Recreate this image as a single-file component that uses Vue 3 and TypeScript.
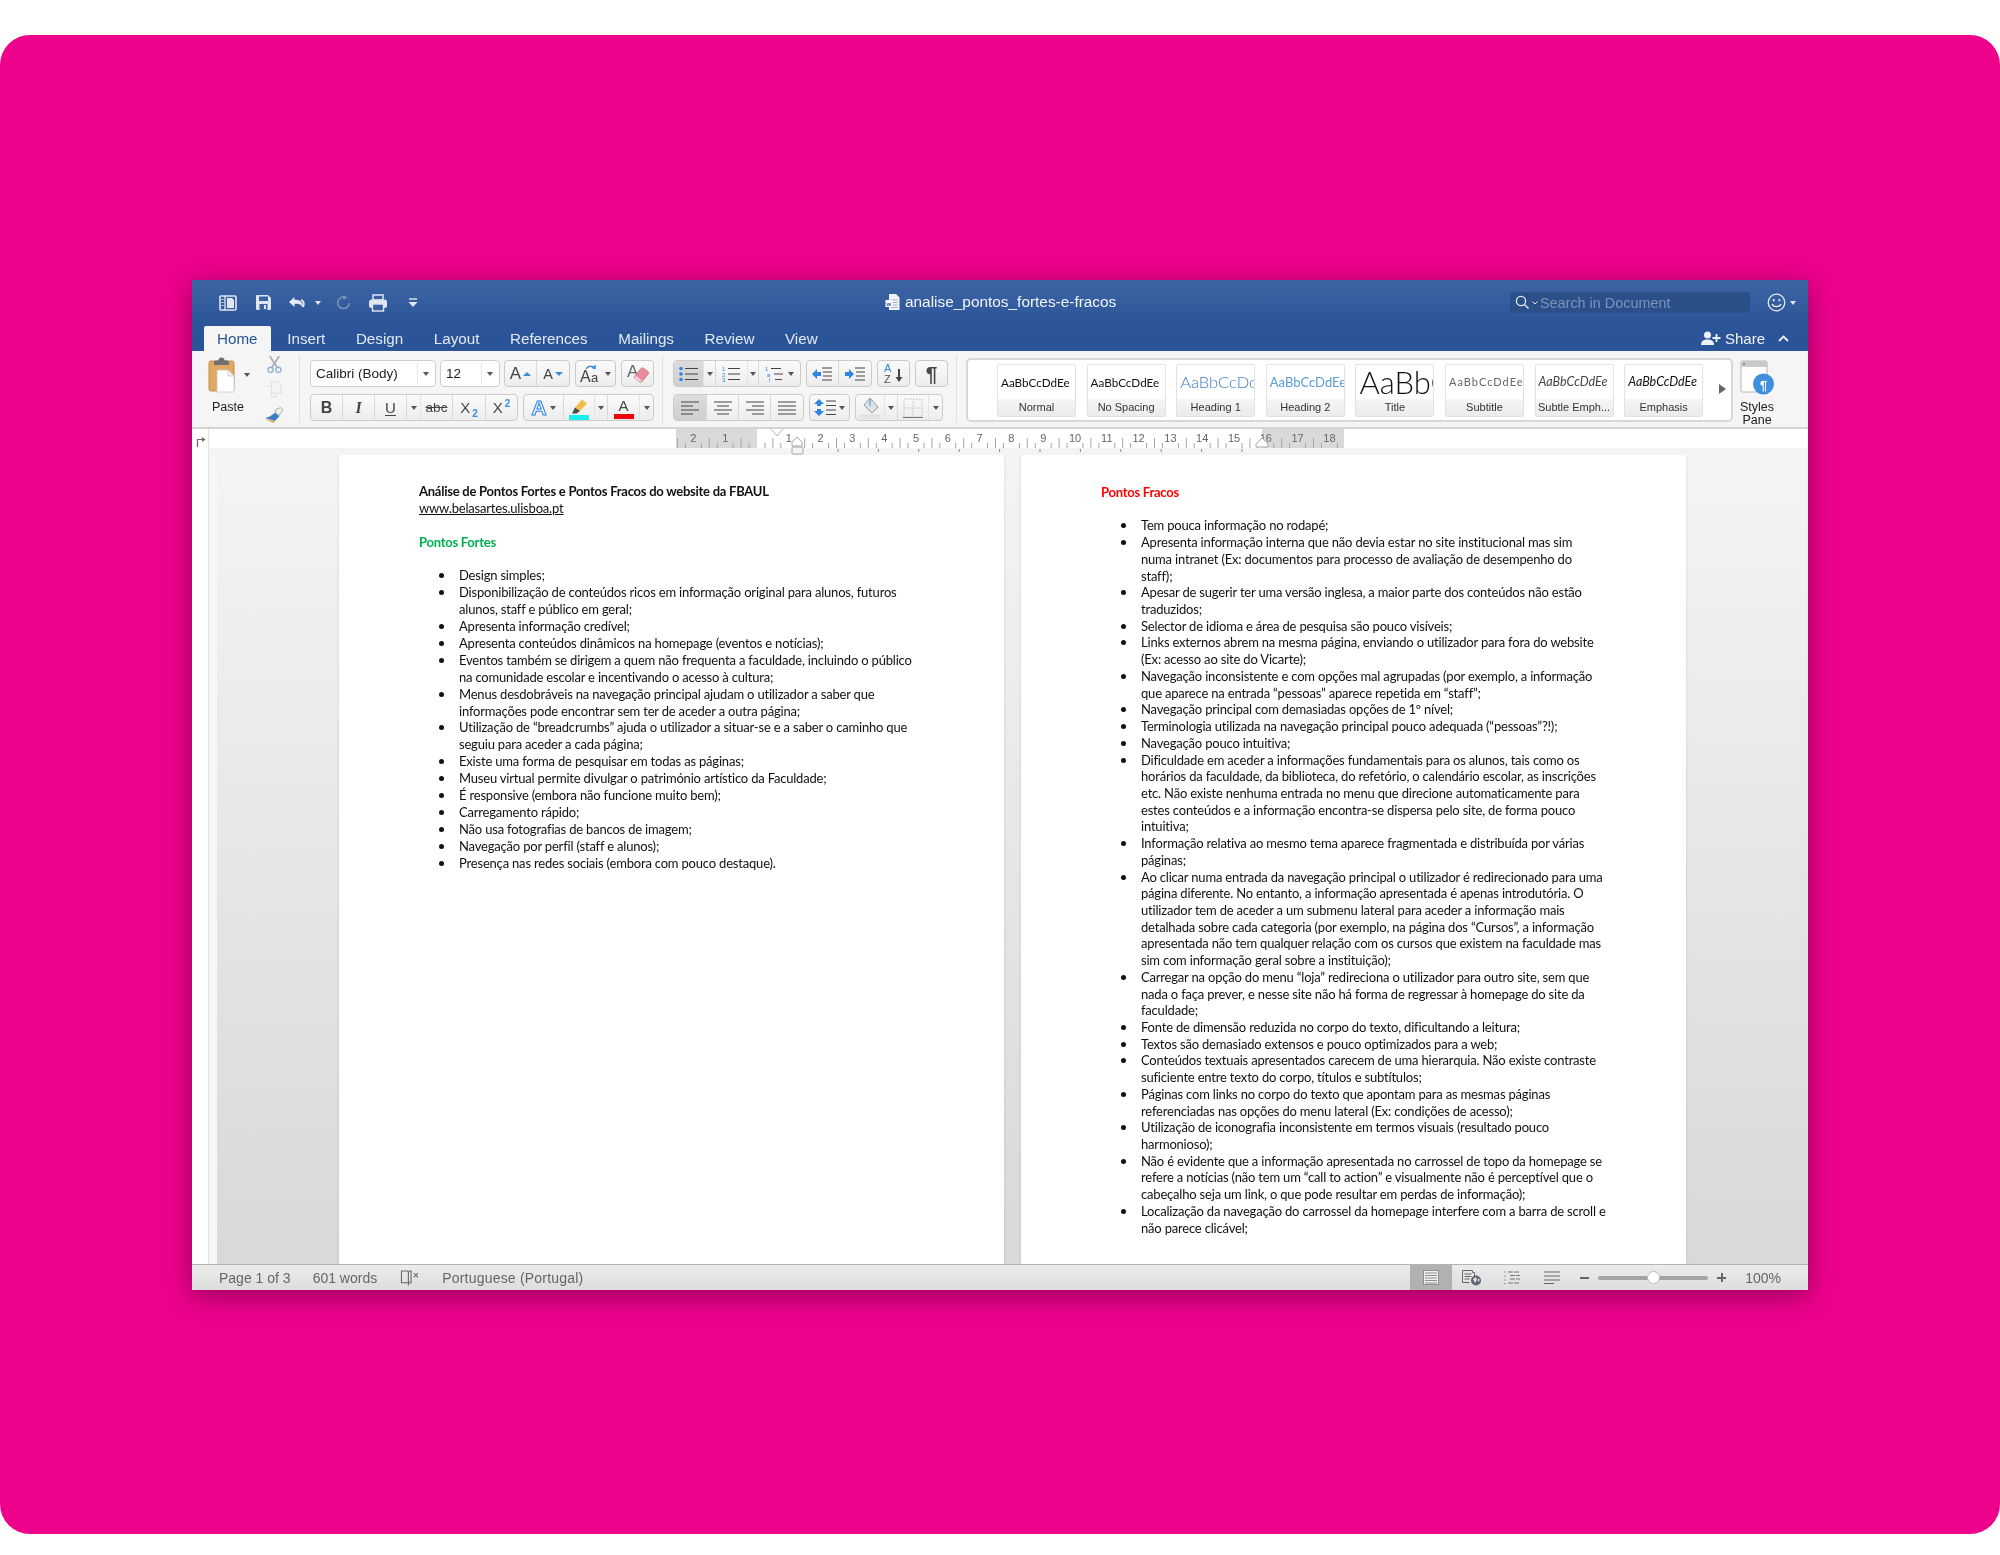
<script setup lang="ts">
const tabs = ['Home', 'Insert', 'Design', 'Layout', 'References', 'Mailings', 'Review', 'View']

const styles = [
  { name: 'Normal', cls: 's-normal', sample: 'AaBbCcDdEe' },
  { name: 'No Spacing', cls: 's-normal', sample: 'AaBbCcDdEe' },
  { name: 'Heading 1', cls: 's-h1', sample: 'AaBbCcDdEe' },
  { name: 'Heading 2', cls: 's-h2', sample: 'AaBbCcDdEe' },
  { name: 'Title', cls: 's-title', sample: 'AaBbCcDdEe' },
  { name: 'Subtitle', cls: 's-sub', sample: 'AaBbCcDdEe' },
  { name: 'Subtle Emph...', cls: 's-subtle', sample: 'AaBbCcDdEe' },
  { name: 'Emphasis', cls: 's-emph', sample: 'AaBbCcDdEe' },
]

const fortes: string[][] = [
  ['Design simples;'],
  ['Disponibilização de conteúdos ricos em informação original para alunos, futuros', 'alunos, staff e público em geral;'],
  ['Apresenta informação credível;'],
  ['Apresenta conteúdos dinâmicos na homepage (eventos e notícias);'],
  ['Eventos também se dirigem a quem não frequenta a faculdade, incluindo o público', 'na comunidade escolar e incentivando o acesso à cultura;'],
  ['Menus desdobráveis na navegação principal ajudam o utilizador a saber que', 'informações pode encontrar sem ter de aceder a outra página;'],
  ['Utilização de “breadcrumbs” ajuda o utilizador a situar-se e a saber o caminho que', 'seguiu para aceder a cada página;'],
  ['Existe uma forma de pesquisar em todas as páginas;'],
  ['Museu virtual permite divulgar o património artístico da Faculdade;'],
  ['É responsive (embora não funcione muito bem);'],
  ['Carregamento rápido;'],
  ['Não usa fotografias de bancos de imagem;'],
  ['Navegação por perfil (staff e alunos);'],
  ['Presença nas redes sociais (embora com pouco destaque).'],
]

const fracos: string[][] = [
  ['Tem pouca informação no rodapé;'],
  ['Apresenta informação interna que não devia estar no site institucional mas sim', 'numa intranet (Ex: documentos para processo de avaliação de desempenho do', 'staff);'],
  ['Apesar de sugerir ter uma versão inglesa, a maior parte dos conteúdos não estão', 'traduzidos;'],
  ['Selector de idioma e área de pesquisa são pouco visíveis;'],
  ['Links externos abrem na mesma página, enviando o utilizador para fora do website', '(Ex: acesso ao site do Vicarte);'],
  ['Navegação inconsistente e com opções mal agrupadas (por exemplo, a informação', 'que aparece na entrada “pessoas” aparece repetida em “staff”;'],
  ['Navegação principal com demasiadas opções de 1º nível;'],
  ['Terminologia utilizada na navegação principal pouco adequada (“pessoas”?!);'],
  ['Navegação pouco intuitiva;'],
  ['Dificuldade em aceder a informações fundamentais para os alunos, tais como os', 'horários da faculdade, da biblioteca, do refetório, o calendário escolar, as inscrições', 'etc. Não existe nenhuma entrada no menu que direcione automaticamente para', 'estes conteúdos e a informação encontra-se dispersa pelo site, de forma pouco', 'intuitiva;'],
  ['Informação relativa ao mesmo tema aparece fragmentada e distribuída por várias', 'páginas;'],
  ['Ao clicar numa entrada da navegação principal o utilizador é redirecionado para uma', 'página diferente. No entanto, a informação apresentada é apenas introdutória. O', 'utilizador tem de aceder a um submenu lateral para aceder a informação mais', 'detalhada sobre cada categoria (por exemplo, na página dos “Cursos”, a informação', 'apresentada não tem qualquer relação com os cursos que existem na faculdade mas', 'sim com informação geral sobre a instituição);'],
  ['Carregar na opção do menu “loja” redireciona o utilizador para outro site, sem que', 'nada o faça prever, e nesse site não há forma de regressar à homepage do site da', 'faculdade;'],
  ['Fonte de dimensão reduzida no corpo do texto, dificultando a leitura;'],
  ['Textos são demasiado extensos e pouco optimizados para a web;'],
  ['Conteúdos textuais apresentados carecem de uma hierarquia. Não existe contraste', 'suficiente entre texto do corpo, títulos e subtítulos;'],
  ['Páginas com links no corpo do texto que apontam para as mesmas páginas', 'referenciadas nas opções do menu lateral (Ex: condições de acesso);'],
  ['Utilização de iconografia inconsistente em termos visuais (resultado pouco', 'harmonioso);'],
  ['Não é evidente que a informação apresentada no carrossel de topo da homepage se', 'refere a notícias (não tem um “call to action” e visualmente não é perceptível que o', 'cabeçalho seja um link, o que pode resultar em perdas de informação);'],
  ['Localização da navegação do carrossel da homepage interfere com a barra de scroll e', 'não parece clicável;'],
]

// ruler: x is measured from the start of the svg, 1 unit on the ruler = 31.8px
const zero = 548
const unit = 31.8
const rulerNums: { x: number; n: number }[] = []
for (let n = 2; n >= 1; n--) rulerNums.push({ x: zero - n * unit, n })
for (let n = 1; n <= 18; n++) rulerNums.push({ x: zero + n * unit, n })

const minorTicks: number[] = []
const halfTicks: number[] = []
for (let i = -10; i <= 73; i++) {
  const x = zero + (i * unit) / 4
  if (i % 4 === 0) continue
  if (i % 2 !== 0) minorTicks.push(x)
  else halfTicks.push(x)
}
const tabStops: number[] = []
for (let i = 0; i < 11; i++) tabStops.push(629 + i * 40.4)
</script>

<template>
  <div class="screen">
    <div class="stage">
      <div class="window">
        <header class="titlebar">
          <div class="top-row">
            <div class="quick">
              <svg class="q-panes" width="18" height="16" viewBox="0 0 18 16">
                <rect x="1" y="1" width="16" height="14" rx="1" fill="none" stroke="#dfe6f2" stroke-width="1.6" />
                <path d="M6 1v14" stroke="#dfe6f2" stroke-width="1.4" />
                <path d="M2.5 4.5h2M2.5 7.5h2M2.5 10.5h2" stroke="#dfe6f2" stroke-width="1.2" />
                <path d="M8 3h5l2 2v8H8z" fill="#dfe6f2" />
              </svg>
              <svg class="q-save" width="17" height="17" viewBox="0 0 17 17">
                <path d="M2 1h11l3 3v10.5a1.5 1.5 0 0 1-1.5 1.5H2a1 1 0 0 1-1-1V2a1 1 0 0 1 1-1z" fill="#dfe6f2" />
                <rect x="4" y="2.5" width="9" height="4.5" fill="#3a62a3" />
                <rect x="4.5" y="10" width="8" height="6" fill="#3a62a3" />
                <rect x="9" y="11" width="2" height="4" fill="#dfe6f2" />
              </svg>
              <svg class="q-undo" width="18" height="14" viewBox="0 0 18 14">
                <path d="M6.5 1 1 6l5.500 5V8c3.500-.6 6.500 0 8 3.500C15.500 6.500 12 3.500 6.500 3.800z" fill="#e7ecf5" />
                <path d="M15 11c1.500-3.500.5-6-2-7.200" fill="none" stroke="#e7ecf5" stroke-width="1.8" />
              </svg>
              <i class="caret light q-caret"></i>
              <svg class="q-redo" width="15" height="15" viewBox="0 0 15 15">
                <path d="M9.5 2.300A5.800 5.800 0 1 0 13.300 8" fill="none" stroke="#7891bb" stroke-width="1.6" />
                <path d="M7.5 0v5l4-2.500z" fill="#7891bb" />
              </svg>
              <svg class="q-print" width="20" height="18" viewBox="0 0 20 18">
                <rect x="5" y="1" width="10" height="5" fill="none" stroke="#dfe6f2" stroke-width="1.5" />
                <rect x="1" y="5.5" width="18" height="8.500" rx="2.5" fill="#dfe6f2" />
                <rect x="4.5" y="10" width="11" height="7" fill="#3a62a3" stroke="#dfe6f2" stroke-width="1.4" />
              </svg>
              <svg class="q-more" width="10" height="10" viewBox="0 0 10 10">
                <path d="M1 1h8" stroke="#dfe6f2" stroke-width="1.4" />
                <path d="M.5 4h9L5 9z" fill="#dfe6f2" />
              </svg>
            </div>
            <div class="doc-title">
              <svg width="15" height="18" viewBox="0 0 15 18">
                <path d="M4 1h7l3.500 3.500V17H4z" fill="#f2f4f8" />
                <path d="M6 7h6.500M6 9.500h6.500M6 12h6.500M6 14.500h6.500" stroke="#9fb3d1" stroke-width="1" />
                <rect x=".5" y="7" width="7" height="7" fill="#fff" />
                <text x="1.5" y="12.800" class="w-mark">w</text>
              </svg>
              <span>analise_pontos_fortes-e-fracos</span>
            </div>
            <div class="search">
              <svg width="16" height="16" viewBox="0 0 16 16">
                <circle cx="6" cy="6" r="4.6" fill="none" stroke="#e3e9f3" stroke-width="1.3" />
                <path d="m9.500 9.500 4 4" stroke="#e3e9f3" stroke-width="1.4" />
              </svg>
              <svg width="6" height="4" viewBox="0 0 6 4"><path d="m.5.500 2.500 2.500L5.500.500" fill="none" stroke="#e3e9f3" /></svg>
              <span>Search in Document</span>
            </div>
            <svg class="smiley" width="19" height="19" viewBox="0 0 19 19">
              <circle cx="9.5" cy="9.5" r="8.3" fill="none" stroke="#e7ecf5" stroke-width="1.3" />
              <circle cx="6.7" cy="7.2" r="1.1" fill="#e7ecf5" />
              <circle cx="12.3" cy="7.2" r="1.1" fill="#e7ecf5" />
              <path d="M5 11c1.200 3.400 7.800 3.400 9 0" fill="none" stroke="#e7ecf5" stroke-width="1.3" />
            </svg>
            <i class="caret light smiley-caret"></i>
          </div>
          <div class="tab-row">
            <nav class="tabs">
              <span v-for="(t, i) in tabs" :key="t" class="tab" :class="{ active: i === 0 }">{{ t }}</span>
            </nav>
            <div class="share">
              <svg width="20" height="15" viewBox="0 0 20 15">
                <circle cx="6.5" cy="4" r="3.5" fill="#eef2f8" />
                <path d="M0 14c0-4 2.500-5.500 6.500-5.500S13 10 13 14z" fill="#eef2f8" />
                <path d="M15.500 3v8M11.500 7h8" stroke="#eef2f8" stroke-width="1.8" />
              </svg>
              <span>Share</span>
              <svg class="chev" width="11" height="7" viewBox="0 0 11 7"><path d="m1 6 4.500-4.500L10 6" fill="none" stroke="#eef2f8" stroke-width="1.8" /></svg>
            </div>
          </div>
        </header>

        <section class="ribbon">
          <div class="group g-paste">
            <div class="paste">
              <div class="paste-top">
                <svg width="30" height="36" viewBox="0 0 30 36">
                  <rect x="1" y="4" width="25" height="30" rx="2" fill="#e0a860" stroke="#c48f4c" />
                  <path d="M6 5.500a2 2 0 0 1 2-2h2.500a3 3 0 0 1 6 0H19a2 2 0 0 1 2 2V8H6z" fill="#6e7074" />
                  <path d="M9 13h11l6 6v16H9z" fill="#fff" stroke="#c8c8c8" stroke-width=".8" />
                  <path d="M20 13v6h6" fill="#f0f0f0" stroke="#c8c8c8" stroke-width=".8" />
                </svg>
                <i class="caret paste-caret"></i>
              </div>
              <span class="paste-label">Paste</span>
            </div>
            <div class="clip-icons">
              <svg width="17" height="18" viewBox="0 0 17 20">
                <path d="M3 0 11.500 13M14 0 5.500 13" stroke="#a9adb3" stroke-width="2" />
                <circle cx="4" cy="16" r="3" fill="none" stroke="#8eb4de" stroke-width="1.6" />
                <circle cx="13" cy="16" r="3" fill="none" stroke="#8eb4de" stroke-width="1.6" />
              </svg>
              <svg width="16" height="18" viewBox="0 0 16 17">
                <path d="M5.500 1h6l3.500 3.500V12H5.500z M1 5h4.500v11H10v-4" fill="none" stroke="#e2e2e2" stroke-width="1.2" />
              </svg>
              <svg width="20" height="17" viewBox="0 0 20 17">
                <path d="M12 2.500 17 .5l2.500 2.500-3 3.500-1 2.500-4-3z" fill="#f0f0f0" stroke="#9a9a9a" stroke-width=".8" />
                <path d="M11 6l4.500 3.500-4.500 5L1 11.500l5-2z" fill="#3c7cc4" />
                <path d="M3 12.500l8 2.500-1.500 1.500L1 12.500z" fill="#e5a13f" />
              </svg>
            </div>
          </div>

          <div class="group g-font">
            <div class="rows">
              <div class="row">
                <div class="field w-126">
                  <span>Calibri (Body)</span><i class="field-sep"></i><i class="caret"></i>
                </div>
                <div class="field w-60">
                  <span>12</span><i class="field-sep"></i><i class="caret"></i>
                </div>
                <div class="seg">
                  <div class="b w-32 big-a"><span class="a18">A</span><i class="tri-up"></i></div>
                  <div class="b w-32 big-a"><span class="a15">A</span><i class="tri-down"></i></div>
                </div>
                <div class="seg">
                  <div class="b w-39 case-btn">
                    <svg width="22" height="20" viewBox="0 0 22 20">
                      <text x="0" y="18" class="case-a">A</text><text x="11" y="18" class="case-b">a</text>
                      <path d="M6 5c2-3.500 6-3.500 8-1" fill="none" stroke="#3a8be0" stroke-width="1.5" />
                      <path d="m16 .5-.5 5-4-1.500z" fill="#3a8be0" />
                    </svg>
                    <i class="caret"></i>
                  </div>
                </div>
                <div class="seg">
                  <div class="b w-31 clear-btn">
                    <svg width="24" height="22" viewBox="0 0 24 22">
                      <text x="1" y="14" class="clear-a">A</text>
                      <path d="M15 5.500c1-1 2-1 3 0l4 3c1 1 1 2 0 3l-6 7c-1 1-2 1-3 0l-4-3c-1-1-1-2 0-3z" fill="#e88b98" stroke="#b86a75" stroke-width=".6" />
                      <path d="m9.500 12.500 6.500 5-2 1.500-5-3.500z" fill="#f5d5d9" />
                    </svg>
                  </div>
                </div>
              </div>
              <div class="row">
                <div class="seg">
                  <div class="b w-32 t-bold">B</div>
                  <div class="b w-32 t-ital">I</div>
                  <div class="b w-32 t-under">U</div>
                  <div class="b w-14 no-sep-light"><i class="caret"></i></div>
                  <div class="b w-32 t-strike">abc</div>
                  <div class="b w-33 t-x"><span>X<sub>2</sub></span></div>
                  <div class="b w-31 t-x"><span>X<sup>2</sup></span></div>
                </div>
                <div class="seg">
                  <div class="b w-40 effect">
                    <span class="a-outline">A</span><i class="caret"></i>
                  </div>
                  <div class="b w-31 marker no-sep-light">
                    <svg width="22" height="22" viewBox="0 0 22 22">
                      <path d="M14 1.500 19 5.500 12 13 7 9.500z" fill="#f1c04c" />
                      <path d="M7 9.500 12 13l-3.500 2.500H4z" fill="#4b4b4b" />
                      <rect x="1" y="17" width="20" height="5" fill="#19eef0" />
                    </svg>
                  </div>
                  <div class="b w-13"><i class="caret"></i></div>
                  <div class="b w-32 font-color no-sep-light">
                    <span>A</span><i class="red-bar"></i>
                  </div>
                  <div class="b w-13"><i class="caret"></i></div>
                </div>
              </div>
            </div>
          </div>

          <div class="group g-para">
            <div class="rows">
              <div class="row">
                <div class="seg">
                  <div class="b w-30 on no-sep-light">
                    <svg width="20" height="16" viewBox="0 0 20 16">
                      <circle cx="2" cy="2.5" r="1.8" fill="#2f86e0" /><circle cx="2" cy="8" r="1.8" fill="#2f86e0" /><circle cx="2" cy="13.5" r="1.8" fill="#2f86e0" />
                      <path d="M6 2.500h13M6 8h13M6 13.500h13" stroke="#444" stroke-width="1.2" />
                    </svg>
                  </div>
                  <div class="b w-12"><i class="caret"></i></div>
                  <div class="b w-32 no-sep-light">
                    <svg width="20" height="16" viewBox="0 0 20 16">
                      <text x="0" y="5" class="nb">1</text><text x="0" y="10.5" class="nb">2</text><text x="0" y="16" class="nb">3</text>
                      <path d="M6 2.500h12M6 8h12M6 13.500h12" stroke="#444" stroke-width="1.2" />
                    </svg>
                  </div>
                  <div class="b w-11"><i class="caret"></i></div>
                  <div class="b w-41 multi">
                    <svg width="20" height="16" viewBox="0 0 20 16">
                      <text x="0" y="5" class="nb">1</text><text x="2" y="10.5" class="nb">a</text><text x="4" y="16" class="nb">i</text>
                      <path d="M6 2.500h10M9 8h9M10 13.500h7" stroke="#444" stroke-width="1.2" />
                    </svg>
                    <i class="caret"></i>
                  </div>
                </div>
                <div class="seg">
                  <div class="b w-32">
                    <svg width="21" height="14" viewBox="0 0 21 14">
                      <path d="M0 7 5 2v3h4v4H5v3z" fill="#2f86e0" />
                      <path d="M10 1h10M11 5h9M11 9h9M10 13h10" stroke="#444" stroke-width="1.2" />
                    </svg>
                  </div>
                  <div class="b w-32">
                    <svg width="21" height="14" viewBox="0 0 21 14">
                      <path d="M9 7 4 2v3H0v4h4v3z" fill="#2f86e0" />
                      <path d="M10 1h10M11 5h9M11 9h9M10 13h10" stroke="#444" stroke-width="1.2" />
                    </svg>
                  </div>
                </div>
                <div class="seg">
                  <div class="b w-31">
                    <svg width="22" height="21" viewBox="0 0 22 21">
                      <text x="1" y="9" class="sort-a">A</text><text x="1" y="20" class="sort-z">Z</text>
                      <path d="M15 6h2v8h2.500L16 19l-3.500-5H15z" fill="#444" />
                    </svg>
                  </div>
                </div>
                <div class="seg">
                  <div class="b w-31 pilcrow">¶</div>
                </div>
              </div>
              <div class="row">
                <div class="seg">
                  <div class="b w-33 on">
                    <svg width="18" height="14" viewBox="0 0 18 14"><path d="M0 1h18M0 5h12M0 9h18M0 13h12" stroke="#444" stroke-width="1.2" /></svg>
                  </div>
                  <div class="b w-32">
                    <svg width="18" height="14" viewBox="0 0 18 14"><path d="M0 1h18M3 5h12M0 9h18M3 13h12" stroke="#444" stroke-width="1.2" /></svg>
                  </div>
                  <div class="b w-32">
                    <svg width="18" height="14" viewBox="0 0 18 14"><path d="M0 1h18M6 5h12M0 9h18M6 13h12" stroke="#444" stroke-width="1.2" /></svg>
                  </div>
                  <div class="b w-32">
                    <svg width="18" height="14" viewBox="0 0 18 14"><path d="M0 1h18M0 5h18M0 9h18M0 13h18" stroke="#444" stroke-width="1.2" /></svg>
                  </div>
                </div>
                <div class="seg">
                  <div class="b w-39 spacing">
                    <svg width="22" height="17" viewBox="0 0 22 17">
                      <path d="M5 0 10 5H7v2H3V5H0z M5 17 0 12h3v-2h4v2h3z" fill="#2f86e0" />
                      <path d="M12 2h10M12 6.500h10M12 11h10M12 15.500h10" stroke="#444" stroke-width="1.2" />
                    </svg>
                    <i class="caret"></i>
                  </div>
                </div>
                <div class="seg">
                  <div class="b w-29 no-sep-light">
                    <svg width="22" height="22" viewBox="0 0 22 22">
                      <path d="M11 1 19 10l-6 6-8-8z" fill="#dbe3ea" stroke="#8d8d8d" stroke-width=".9" />
                      <path d="M11 1v8" stroke="#7aa8d8" stroke-width="1.6" />
                      <rect x="1" y="18" width="20" height="4" fill="#e6e6e6" stroke="#d4d4d4" stroke-width=".6" />
                    </svg>
                  </div>
                  <div class="b w-13"><i class="caret"></i></div>
                  <div class="b w-31 no-sep-light">
                    <svg width="20" height="20" viewBox="0 0 20 20">
                      <path d="M1 1h18v18H1zM10 1v18M1 10h18" fill="none" stroke="#bdbdbd" stroke-dasharray="1.5 1.5" />
                      <path d="M0 19.500h20" stroke="#777" stroke-width="1.2" />
                    </svg>
                  </div>
                  <div class="b w-13"><i class="caret"></i></div>
                </div>
              </div>
            </div>
          </div>

          <div class="gallery">
            <div v-for="s in styles" :key="s.name" class="style-card">
              <div class="sample" :class="s.cls">{{ s.sample }}</div>
              <div class="style-name">{{ s.name }}</div>
            </div>
            <i class="gallery-next"></i>
          </div>

          <div class="pane">
            <svg width="34" height="36" viewBox="0 0 34 36">
              <rect x="1" y="1" width="26" height="31" rx="1.5" fill="#fff" stroke="#b5b5b5" />
              <rect x="1" y="1" width="26" height="6" fill="#c9c9c9" />
              <circle cx="4" cy="4" r="1" fill="#777" />
              <circle cx="23.5" cy="24" r="10.5" fill="#3f8fdc" />
              <text x="23.5" y="30" text-anchor="middle" class="pane-p">¶</text>
            </svg>
            <span>Styles<br />Pane</span>
          </div>
        </section>

        <div class="ruler">
          <div class="ruler-corner">
            <svg width="10" height="11" viewBox="0 0 10 11">
              <path d="M1.500 11V3.500h5" fill="none" stroke="#666" stroke-width="1.2" />
              <path d="M6 1v5l3.500-2.500z" fill="#666" />
            </svg>
          </div>
          <svg class="ruler-svg" width="1599" height="26" viewBox="0 0 1599 26">
            <rect x="0" y="0" width="1599" height="19" fill="#fff" />
            <rect x="0" y="19" width="1599" height="7" fill="#f4f4f4" />
            <rect x="467" y="0" width="81" height="19" fill="#d9d9d9" />
            <rect x="1053" y="0" width="82" height="19" fill="#d9d9d9" />
            <path v-for="x in minorTicks" :key="'m' + x" :d="`M${x} 14v5`" stroke="#a5a5a5" />
            <path v-for="x in halfTicks" :key="'h' + x" :d="`M${x} 9v10`" stroke="#a5a5a5" />
            <path v-for="x in tabStops" :key="'t' + x" :d="`M${x} 20v3`" stroke="#888" />
            <text v-for="r in rulerNums" :key="r.n + '-' + r.x" :x="r.x" y="13" text-anchor="middle" class="ruler-num">{{ r.n }}</text>
            <path d="M562 0l6 7 6-7" fill="#fff" stroke="#b5b5b5" />
            <path d="M583 17V13l5-5 5 5v4z" fill="#fff" stroke="#a8a8a8" />
            <rect x="583" y="18" width="11" height="7" rx="1" fill="#f3f3f3" stroke="#a8a8a8" />
            <path d="M1047 18v-3l6-6 6 6v3z" fill="#fff" stroke="#a8a8a8" />
          </svg>
        </div>

        <main class="doc">
          <div class="rail"></div>
          <div class="rail-gap"></div>
          <div class="canvas">
            <article class="page left-page">
              <p class="line bold">Análise de Pontos Fortes e Pontos Fracos do website da FBAUL</p>
              <p class="line link">www.belasartes.ulisboa.pt</p>
              <p class="line">&nbsp;</p>
              <p class="line bold green">Pontos Fortes</p>
              <p class="line">&nbsp;</p>
              <ul class="bullets">
                <li v-for="(item, i) in fortes" :key="i">
                  <i class="dot"></i>
                  <div>
                    <p v-for="l in item" :key="l" class="line">{{ l }}</p>
                  </div>
                </li>
              </ul>
            </article>
            <article class="page right-page">
              <p class="line bold red">Pontos Fracos</p>
              <p class="line">&nbsp;</p>
              <ul class="bullets">
                <li v-for="(item, i) in fracos" :key="i">
                  <i class="dot"></i>
                  <div>
                    <p v-for="l in item" :key="l" class="line">{{ l }}</p>
                  </div>
                </li>
              </ul>
            </article>
          </div>
        </main>

        <footer class="status">
          <span class="st-page">Page 1 of 3</span>
          <span class="st-words">601 words</span>
          <svg class="st-book" width="20" height="16" viewBox="0 0 18 15">
            <path d="M1 1h5.500l1 1v10H1zM7.500 2l1-1H10v11H7.500z" fill="none" stroke="#666" />
            <path d="M7.500 12v2.500" stroke="#666" />
            <path d="m12.500 3 4 4M16.500 3l-4 4" stroke="#666" />
          </svg>
          <span class="st-lang">Portuguese (Portugal)</span>
          <div class="views">
            <div class="view on">
              <svg width="16" height="15" viewBox="0 0 16 15">
                <rect x=".5" y=".5" width="15" height="14" fill="#f1f1f1" stroke="#8f8f8f" />
                <path d="M2 3h12M2 5.500h12M2 8h12M2 10.500h12M2 13h12" stroke="#8f8f8f" />
              </svg>
            </div>
            <div class="view">
              <svg width="20" height="16" viewBox="0 0 20 16">
                <path d="M.5.500h10v2h2v6M.5.500v12h7" fill="none" stroke="#666" />
                <path d="M2.500 4h7M2.500 6.500h7M2.500 9h5" stroke="#666" />
                <circle cx="14" cy="10.5" r="5" fill="#5c6570" />
                <path d="M11 9l3-2 1 3-2 3zM16 8l2 2-2 2z" fill="#dfe3e7" />
              </svg>
            </div>
            <div class="view">
              <svg width="18" height="13" viewBox="0 0 18 13">
                <path d="M1 1h1.500M1 5h1.500M1 9h1.500M1 12.500h1.500" stroke="#888" />
                <path d="M5 1h12M7 4.500h10M7 8h10M5 12h12" stroke="#777" stroke-dasharray="5 1" />
              </svg>
            </div>
            <div class="view">
              <svg width="16" height="13" viewBox="0 0 16 13"><path d="M0 1h16M0 5h16M0 9h16M0 12.500h10" stroke="#666" stroke-width="1.2" /></svg>
            </div>
          </div>
          <div class="zoomer">
            <i class="z-minus"></i>
            <div class="z-track"><i class="z-knob"></i></div>
            <i class="z-plus"></i>
          </div>
          <span class="st-zoom">100%</span>
        </footer>
      </div>
    </div>
  </div>
</template>

<style>
html,
body {
  margin: 0;
  background: #fff;
}
</style>

<style scoped>
.screen {
  width: 2000px;
  height: 1555px;
  padding-top: 35px;
  box-sizing: border-box;
  background: #fff;
  font-family: 'Liberation Sans', Arial, sans-serif;
  overflow: hidden;
}

.stage {
  height: 1499px;
  background: #ee028c;
  border-radius: 30px;
  padding: 245px 192px 0;
  box-sizing: border-box;
}

.window {
  width: 1616px;
  height: 1010px;
  display: flex;
  flex-direction: column;
  background: #f5f5f5;
  overflow: hidden;
  box-shadow: 0 6px 26px rgba(30, 0, 20, 0.42);
  position: relative;
}

.titlebar,
.ribbon,
.ruler,
.doc,
.status {
  filter: blur(0.3px);
}

/* title bar */
.titlebar {
  height: 71px;
  flex: none;
  background: linear-gradient(#3d65a5, #2c5599 60%, #2b5498);
  color: #fff;
}

.top-row {
  height: 45px;
  display: flex;
  align-items: center;
  position: relative;
  box-sizing: border-box;
}

.quick {
  display: flex;
  align-items: center;
  padding-left: 27px;
  height: 100%;
}

.q-save {
  margin-left: 18px;
}

.q-undo {
  margin-left: 15.5px;
}

.q-caret {
  margin-left: 9px;
}

.q-redo {
  margin-left: 15.5px;
}

.q-print {
  margin-left: 17px;
}

.q-more {
  margin-left: 20px;
}

.doc-title {
  position: absolute;
  left: 693px;
  top: 13px;
  display: flex;
  align-items: center;
  gap: 5px;
  font-size: 15.4px;
  height: 18px;
  color: #f2f5fa;
}

.w-mark {
  font: bold 6px 'Liberation Sans', sans-serif;
  fill: #2b5498;
}

.search {
  margin-left: auto;
  width: 240px;
  height: 21px;
  background: #2b4f89;
  border-radius: 3px;
  display: flex;
  align-items: center;
  gap: 1px;
  padding-left: 5px;
  box-sizing: border-box;
  font-size: 14.4px;
  color: #7b94bc;
}

.search span {
  margin-left: 1px;
}

.smiley {
  margin-left: 17px;
}

.smiley-caret {
  margin: 0 12px 0 4px;
}

.tab-row {
  height: 26px;
  display: flex;
  justify-content: space-between;
  align-items: flex-end;
  padding: 0 19px 0 12px;
}

.tabs {
  display: flex;
}

.tab {
  height: 25px;
  line-height: 25px;
  padding: 0 15.3px;
  font-size: 15.2px;
  color: #e3e9f3;
}

.tab.active {
  background: #f5f5f5;
  color: #2b5498;
  border-radius: 2px 2px 0 0;
  padding: 0 13px;
  margin-right: 1.5px;
}

.share {
  display: flex;
  align-items: center;
  height: 25px;
  font-size: 15px;
  color: #eef2f8;
  gap: 4px;
}

.chev {
  margin-left: 9px;
}

/* ribbon */
.ribbon {
  height: 78px;
  flex: none;
  box-sizing: border-box;
  display: flex;
  background: #f5f5f5;
  border-bottom: 2px solid #d4d4d4;
}

.group {
  height: 68px;
  margin-top: 4px;
  padding-top: 5px;
  box-sizing: border-box;
  border-right: 1px solid #e0e0e0;
  display: flex;
}

.g-paste {
  width: 108px;
  padding-left: 15px;
  padding-top: 0;
}

.paste {
  width: 44px;
  display: flex;
  flex-direction: column;
}

.paste-top {
  display: flex;
  align-items: center;
  height: 40px;
  padding-left: 1px;
}

.paste-caret {
  margin-left: 6px;
}

.paste-label {
  font-size: 12.5px;
  color: #222;
  margin-top: 5px;
  padding-left: 5px;
}

.clip-icons {
  margin-left: 12px;
  display: flex;
  flex-direction: column;
  align-items: center;
  width: 22px;
  gap: 8px;
  padding-top: 1px;
}

.g-font {
  width: 363px;
  padding-left: 10px;
}

.g-para {
  width: 294px;
  padding-left: 10px;
}

.rows {
  display: flex;
  flex-direction: column;
  gap: 7px;
}

.row {
  display: flex;
  gap: 5px;
  height: 27px;
}

.field {
  height: 27px;
  box-sizing: border-box;
  background: #fff;
  border: 1px solid #cfcfcf;
  border-radius: 4px;
  display: flex;
  align-items: center;
  padding-left: 5px;
  font-size: 13.5px;
  color: #222;
  margin-right: -1px;
}

.field span {
  flex: 1;
}

.field-sep {
  width: 1px;
  height: 21px;
  background: #e6e6e6;
  margin-right: 5px;
}

.field .caret {
  margin-right: 6px;
}

.seg {
  display: flex;
  height: 27px;
  box-sizing: border-box;
  border: 1px solid #cbcbcb;
  border-radius: 4px;
  background: linear-gradient(#fafafa, #ededed);
  overflow: hidden;
}

.b {
  height: 100%;
  box-sizing: border-box;
  border-right: 1px solid #d9d9d9;
  display: flex;
  align-items: center;
  justify-content: center;
  color: #444;
  flex: none;
  gap: 3px;
}

.b:last-child {
  border-right: 0;
}

.b.no-sep-light {
  border-right-color: #e4e4e4;
}

.b.on {
  background: linear-gradient(#dcdcdc, #cfcfcf);
}

.w-126 {
  width: 126px;
}

.w-60 {
  width: 60px;
}

.w-41 {
  width: 41px;
}

.w-40 {
  width: 40px;
}

.w-39 {
  width: 39px;
}

.w-33 {
  width: 33px;
}

.w-32 {
  width: 32px;
}

.w-31 {
  width: 31px;
}

.w-30 {
  width: 30px;
}

.w-29 {
  width: 29px;
}

.w-14 {
  width: 14px;
}

.w-13 {
  width: 13px;
}

.w-12 {
  width: 12px;
}

.w-11 {
  width: 11px;
}

.caret {
  display: inline-block;
  width: 0;
  height: 0;
  border-left: 3px solid transparent;
  border-right: 3px solid transparent;
  border-top: 4px solid #555;
  flex: none;
}

.caret.light {
  border-top-color: #dfe6f2;
}

.a18 {
  font-size: 17px;
}

.a15 {
  font-size: 14.5px;
}

.big-a {
  gap: 2px;
}

.tri-up,
.tri-down {
  width: 0;
  height: 0;
  border-left: 4px solid transparent;
  border-right: 4px solid transparent;
}

.tri-up {
  border-bottom: 4px solid #3a8be0;
}

.tri-down {
  border-top: 4px solid #3a8be0;
}

.case-a {
  font: 16px 'Liberation Sans', sans-serif;
  fill: #444;
}

.case-b {
  font: 13px 'Liberation Sans', sans-serif;
  fill: #444;
}

.clear-a {
  font: 17px 'Liberation Sans', sans-serif;
  fill: #666;
}

.t-bold {
  font: bold 16px 'Liberation Sans', sans-serif;
}

.t-ital {
  font: italic bold 16px 'Liberation Serif', serif;
}

.t-under {
  font-size: 15px;
  text-decoration: underline;
  text-underline-offset: 2px;
}

.t-strike {
  font-size: 13.5px;
  text-decoration: line-through;
}

.t-x {
  font-size: 15px;
}

.t-x sub,
.t-x sup {
  font-size: 10px;
  font-weight: bold;
  color: #3a8be0;
  line-height: 0;
  margin-left: 2px;
}

.a-outline {
  font: bold 21px 'Liberation Sans', sans-serif;
  color: #eaf3fc;
  -webkit-text-stroke: 1px #2f86e0;
}

.marker svg {
  margin-top: 2px;
}

.font-color {
  flex-direction: column;
  gap: 0;
}

.font-color span {
  font-size: 15px;
  line-height: 15px;
  margin-top: 1px;
}

.red-bar {
  width: 20px;
  height: 5px;
  background: #f00008;
  margin-top: 1px;
}

.nb {
  font: 6px 'Liberation Sans', sans-serif;
  fill: #2f86e0;
}

.sort-a {
  font: 11px 'Liberation Sans', sans-serif;
  fill: #2f86e0;
}

.sort-z {
  font: 11px 'Liberation Sans', sans-serif;
  fill: #555;
}

.pilcrow {
  font: bold 21px 'Liberation Sans', sans-serif;
  color: #4a4a4a;
}

/* styles gallery */
.gallery {
  width: 767px;
  height: 64px;
  margin: 7px 0 0 9px;
  box-sizing: border-box;
  background: #fff;
  border: 2px solid #d7d7d7;
  border-radius: 5px;
  display: flex;
  gap: 10.6px;
  padding: 4px 0 0 29px;
  position: relative;
}

.style-card {
  width: 79px;
  height: 53px;
  box-sizing: border-box;
  border: 1px solid #e2e2e2;
  border-radius: 2px;
  display: flex;
  flex-direction: column;
  overflow: hidden;
  flex: none;
}

.sample {
  flex: none;
  height: 34px;
  line-height: 34px;
  padding-left: 3px;
  white-space: nowrap;
  overflow: hidden;
  font-family: Lato, sans-serif;
  color: #111;
  background: #fff;
}

.s-normal {
  font-size: 11.7px;
}

.s-h1 {
  font-size: 16.5px;
  font-weight: 300;
  color: #3f7fc0;
}

.s-h2 {
  font-size: 13px;
  color: #5b9bd5;
}

.s-title {
  font-size: 31px;
  font-weight: 300;
  color: #111;
}

.s-sub {
  font-size: 11px;
  letter-spacing: 1px;
  color: #666;
}

.s-subtle {
  font-size: 12.5px;
  font-style: italic;
  color: #444;
}

.s-emph {
  font-size: 12.5px;
  font-style: italic;
}

.style-name {
  flex: none;
  height: 17px;
  background: linear-gradient(#f6f6f6, #ebebeb);
  font-size: 11px;
  line-height: 17px;
  text-align: center;
  color: #333;
  white-space: nowrap;
}

.gallery-next {
  position: absolute;
  left: 751px;
  top: 24px;
  width: 0;
  height: 0;
  border-top: 5px solid transparent;
  border-bottom: 5px solid transparent;
  border-left: 7px solid #666;
}

.pane {
  width: 48px;
  display: flex;
  flex-direction: column;
  align-items: center;
  padding: 9px 0 0 0;
  box-sizing: border-box;
  font-size: 12.5px;
  line-height: 13px;
  text-align: center;
  color: #222;
}

.pane span {
  margin-top: 5px;
}

.pane-p {
  font: bold 13px 'Liberation Sans', sans-serif;
  fill: #fff;
}

/* ruler */
.ruler {
  height: 26px;
  flex: none;
  display: flex;
  background: #fff;
  position: relative;
}

.ruler-corner {
  width: 17px;
  height: 26px;
  box-sizing: border-box;
  border-right: 1px solid #e3e3e3;
  padding: 4px 0 0 4px;
  background: #fff;
}

.ruler-svg {
  display: block;
}

.ruler-num {
  font: 11px 'Liberation Sans', sans-serif;
  fill: #666;
}

/* document */
.doc {
  flex: 1;
  min-height: 0;
  display: flex;
  overflow: hidden;
}

.rail {
  width: 17px;
  flex: none;
  background: #fff;
  box-sizing: border-box;
  border-right: 1px solid #e3e3e3;
}

.rail-gap {
  width: 8px;
  flex: none;
  background: #f7f7f7;
}

.canvas {
  flex: 1;
  display: flex;
  gap: 17px;
  padding-left: 122px;
  background: linear-gradient(#f4f4f4, #d8d8d8);
}

.page {
  width: 665px;
  flex: none;
  background: #fff;
  box-shadow: 0 0 3px rgba(0, 0, 0, 0.12);
  padding: 28px 0 0 80px;
  box-sizing: border-box;
  font-family: Lato, sans-serif;
  font-size: 13px;
  color: #111;
  letter-spacing: -0.19px;
}

.left-page {
  --lh: 16.9px;
}

.right-page {
  --lh: 16.73px;
  padding-top: 29px;
}

.line {
  margin: 0;
  height: var(--lh);
  line-height: var(--lh);
  white-space: nowrap;
}

.bold {
  font-weight: 700;
  letter-spacing: -0.25px;
}

.link {
  text-decoration: underline;
}

.green {
  color: #00b050;
}

.red {
  color: #f00;
}

.bullets {
  list-style: none;
  margin: 0;
  padding: 0 0 0 20px;
}

.bullets li {
  display: flex;
}

.dot {
  flex: none;
  width: 5px;
  height: 5px;
  border-radius: 50%;
  background: #111;
  margin: 6px 15px 0 0;
}

/* status bar */
.status {
  height: 26px;
  flex: none;
  box-sizing: border-box;
  border-top: 1px solid #b4b4b4;
  background: linear-gradient(#ececec, #dddddd);
  display: flex;
  align-items: center;
  font-size: 14px;
  color: #666;
  padding-left: 27px;
}

.st-words {
  margin-left: 22px;
}

.st-book {
  margin-left: 23px;
}

.st-lang {
  margin-left: 22px;
  letter-spacing: 0.2px;
}

.views {
  margin-left: auto;
  display: flex;
  height: 100%;
}

.view {
  width: 40px;
  display: flex;
  align-items: center;
  justify-content: center;
}

.view.on {
  width: 42px;
  background: #b1b1b1;
}

.zoomer {
  display: flex;
  align-items: center;
  margin-left: 8.5px;
}

.z-minus {
  width: 9px;
  height: 2px;
  background: #666;
}

.z-track {
  width: 110px;
  height: 4px;
  margin: 0 9px;
  background: #a3a3a3;
  border-radius: 2px;
  position: relative;
}

.z-knob {
  position: absolute;
  left: 49px;
  top: -5px;
  width: 13px;
  height: 13px;
  box-sizing: border-box;
  border-radius: 50%;
  background: #fff;
  border: 1px solid #bbb;
}

.z-plus {
  width: 9px;
  height: 9px;
  background: linear-gradient(#666, #666) center / 9px 2px no-repeat, linear-gradient(#666, #666) center / 2px 9px no-repeat;
}

.st-zoom {
  margin: 0 27px 0 19px;
}
</style>
